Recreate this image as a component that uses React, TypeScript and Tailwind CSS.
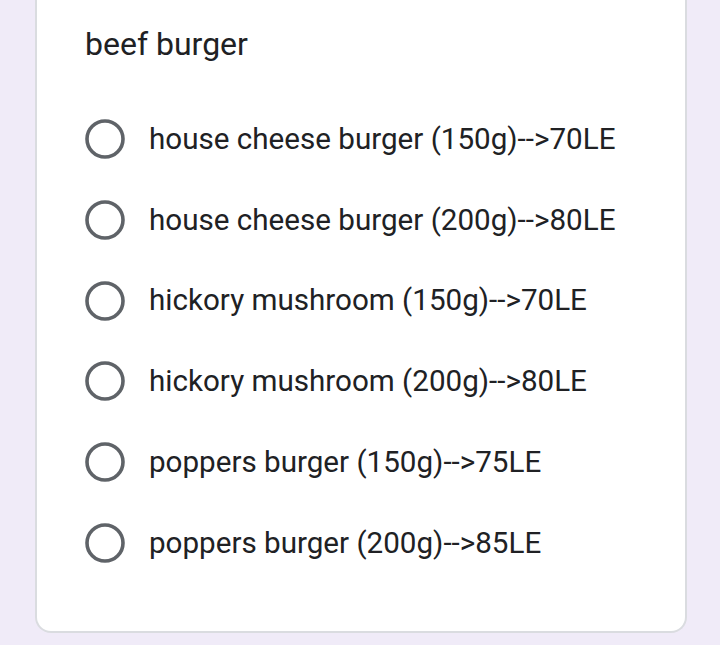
const options = [
  "house cheese burger (150g)-->70LE",
  "house cheese burger (200g)-->80LE",
  "hickory mushroom (150g)-->70LE",
  "hickory mushroom (200g)-->80LE",
  "poppers burger (150g)-->75LE",
  "poppers burger (200g)-->85LE",
];

function Radio() {
  return (
    <svg width="40" height="40" viewBox="0 0 40 40" className="shrink-0">
      <circle cx="20" cy="20" r="18" fill="none" stroke="#5f6368" strokeWidth="3.6" />
    </svg>
  );
}

export default function App() {
  return (
    <div className="min-h-[645px] bg-[#f0ebf8] px-[35px] pb-[12px] font-['Roboto',sans-serif]">
      <div className="w-[652px] rounded-b-[16px] border-x-2 border-b-2 border-[#dadce0] bg-white pl-[48px] pr-6 pt-[20px] pb-[48px]">
        <div className="text-[32px] leading-[48px] text-[#202124]">beef burger</div>
        <div className="mt-[30.6px] flex flex-col">
          {options.map((o) => (
            <label key={o} className="flex h-[80.8px] items-center gap-[24px]">
              <Radio />
              <span className="text-[29.6px] text-[#202124]">{o}</span>
            </label>
          ))}
        </div>
      </div>
    </div>
  );
}
